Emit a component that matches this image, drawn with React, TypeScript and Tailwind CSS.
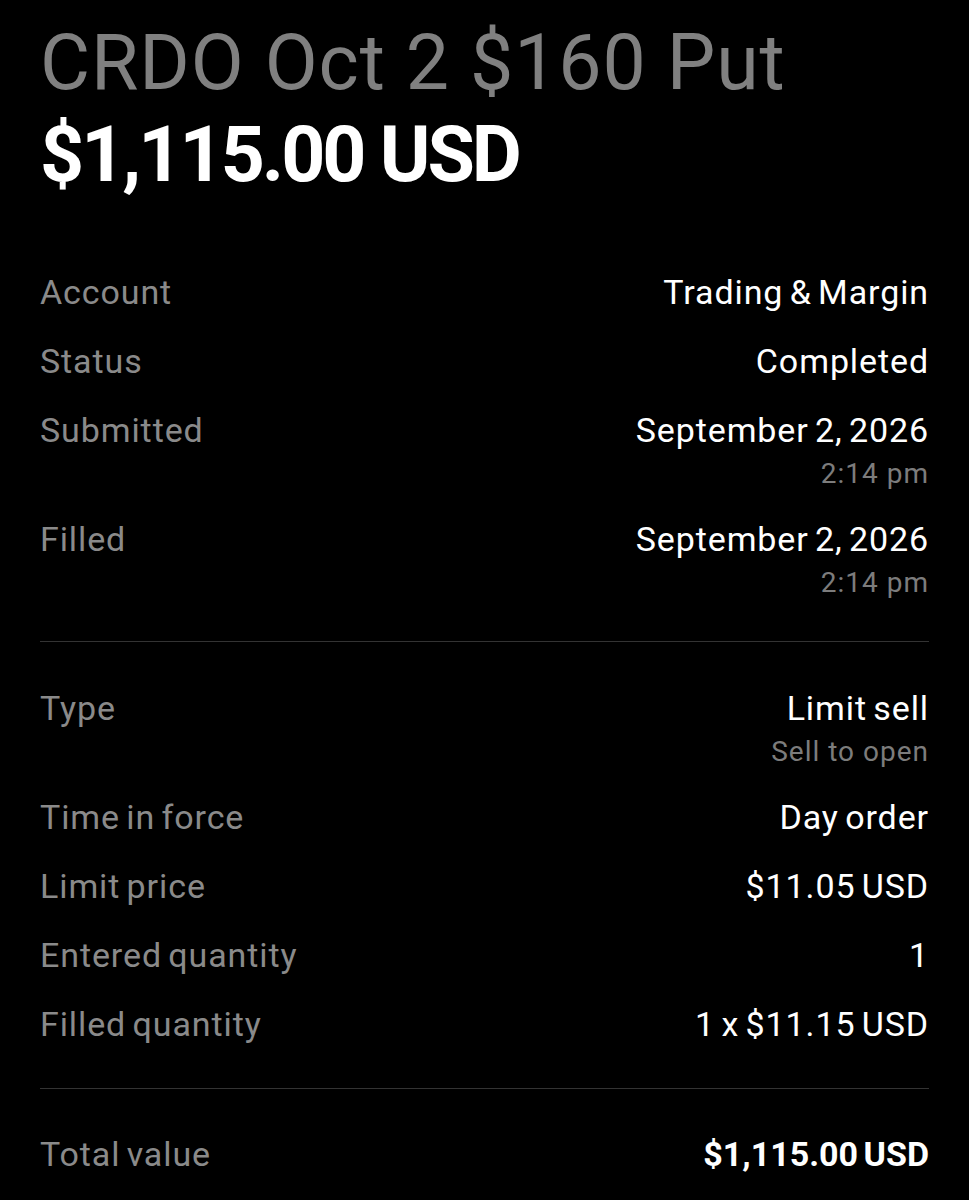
import React from "react";

type Row = { label: string; value: string; sub?: string; bold?: boolean };

const topRows: Row[] = [
  { label: "Account", value: "Trading & Margin" },
  { label: "Status", value: "Completed" },
  { label: "Submitted", value: "September 2, 2026", sub: "2:14 pm" },
  { label: "Filled", value: "September 2, 2026", sub: "2:14 pm" },
];

const orderRows: Row[] = [
  { label: "Type", value: "Limit sell", sub: "Sell to open" },
  { label: "Time in force", value: "Day order" },
  { label: "Limit price", value: "$11.05 USD" },
  { label: "Entered quantity", value: "1" },
  { label: "Filled quantity", value: "1 x $11.15 USD" },
];

const DetailRow = ({ row }: { row: Row }) => (
  <div className="flex justify-between items-start">
    <span className="text-[34px] leading-[44px] text-[#8a8a8a] tracking-[0.9px] [word-spacing:-3px]">
      {row.label}
    </span>
    <div className="flex flex-col items-end">
      <span
        className={`text-[34px] leading-[44px] text-white [word-spacing:-3px] ${row.bold ? "font-bold tracking-[0px]" : "tracking-[0.9px]"}`}
      >
        {row.value}
      </span>
      {row.sub && (
        <span className="mt-1 text-[28px] leading-[36px] text-[#7c7c7c] tracking-[1px]">{row.sub}</span>
      )}
    </div>
  </div>
);

export default function App() {
  return (
    <div className="min-h-[1200px] w-[969px] bg-black px-[40px] pt-[17px] font-['Roboto',sans-serif] overflow-hidden">
      <h1 className="text-[77px] leading-[92px] text-[#808080] tracking-[0.9px]">CRDO Oct 2 $160 Put</h1>
      <div className="text-[77px] leading-[92px] font-bold text-white tracking-[-3px]">$1,115.00 USD</div>

      {/* account details */}
      <div className="mt-[69px] flex flex-col gap-[25px]">
        {topRows.map((r) => (
          <DetailRow key={r.label} row={r} />
        ))}
      </div>

      <hr className="mt-[40px] border-0 border-t border-[#333333]" />

      {/* order details */}
      <div className="mt-[44px] flex flex-col gap-[25px]">
        {orderRows.map((r) => (
          <DetailRow key={r.label} row={r} />
        ))}
      </div>

      <hr className="mt-[42px] border-0 border-t border-[#333333]" />

      <div className="mt-[43px]">
        <DetailRow row={{ label: "Total value", value: "$1,115.00 USD", bold: true }} />
      </div>
    </div>
  );
}
